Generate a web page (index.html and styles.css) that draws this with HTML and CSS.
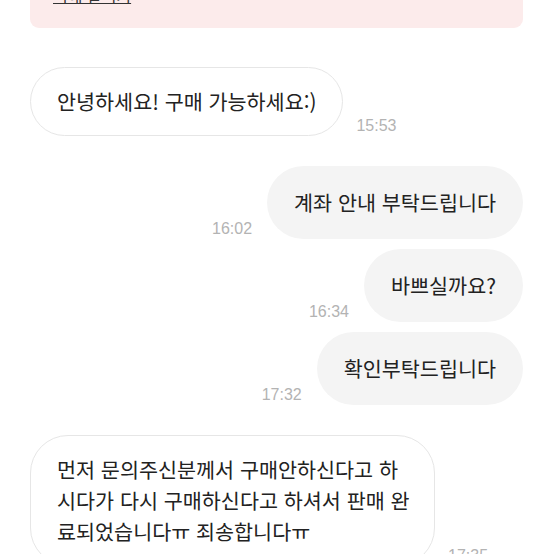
FILE: index.html
```html
<!DOCTYPE html>
<html lang="ko">
<head>
  <meta charset="UTF-8">
  <meta name="viewport" content="width=device-width, initial-scale=1.0">
  <title>채팅</title>
  <link rel="stylesheet" href="styles.css">
</head>
<body>
  <div class="chat">
    <!-- Safety notice (scrolled partly out of view) -->
    <div class="notice">
      <a href="#" class="notice-link">피해 알리기</a>
    </div>

    <div class="row received">
      <div class="bubble">안녕하세요! 구매 가능하세요:)</div>
      <span class="time">15:53</span>
    </div>

    <div class="group">
      <div class="row sent">
        <span class="time">16:02</span>
        <div class="bubble">계좌 안내 부탁드립니다</div>
      </div>
      <div class="row sent">
        <span class="time">16:34</span>
        <div class="bubble">바쁘실까요?</div>
      </div>
      <div class="row sent">
        <span class="time">17:32</span>
        <div class="bubble">확인부탁드립니다</div>
      </div>
    </div>

    <div class="row received">
      <div class="bubble wide">먼저 문의주신분께서 구매안하신다고 하시다가 다시 구매하신다고 하셔서 판매 완료되었습니다ㅠ 죄송합니다ㅠ</div>
      <span class="time">17:35</span>
    </div>
  </div>
</body>
</html>
```

FILE: styles.css
```css
* {
  margin: 0;
  padding: 0;
  box-sizing: border-box;
}
html, body {
  height: 100%;
  overflow: hidden;
  background: #fff;
}
body {
  font-family: "Noto Sans CJK KR", "Noto Sans", sans-serif;
  color: #222;
}
.chat {
  display: flex;
  flex-direction: column;
  gap: 30px;
  padding: 0 31px 0 30px;
}
/* Notice box at the top */
.notice {
  margin-top: -16px;
  margin-bottom: 9px;
  padding: 0 23px 22px;
  background: #fcebeb;
  border-radius: 0 0 9px 9px;
  font-size: 16px;
  line-height: 22px;
}
.notice-link {
  color: #333;
  text-decoration: underline;
}
/* Messages */
.group {
  display: flex;
  flex-direction: column;
  gap: 10px;
}
.row {
  display: flex;
  align-items: flex-end;
}
.row.received {
  gap: 13px;
}
.row.sent {
  justify-content: flex-end;
  gap: 15px;
}
.bubble {
  font-size: 20.7px;
  line-height: 31px;
  border-radius: 37px;
}
.received .bubble {
  padding: 18px 26px;
  background: #fff;
  border: 1px solid #e6e6e6;
}
.received .bubble.wide {
  width: 405px;
  padding-right: 21px;
  border-radius: 38px;
}
.sent .bubble {
  padding: 21px 27px;
  background: #f4f4f4;
}
.time {
  font-family: "Liberation Sans", Arial, sans-serif;
  font-size: 16px;
  line-height: 20px;
  color: #b3b3b3;
}
```
